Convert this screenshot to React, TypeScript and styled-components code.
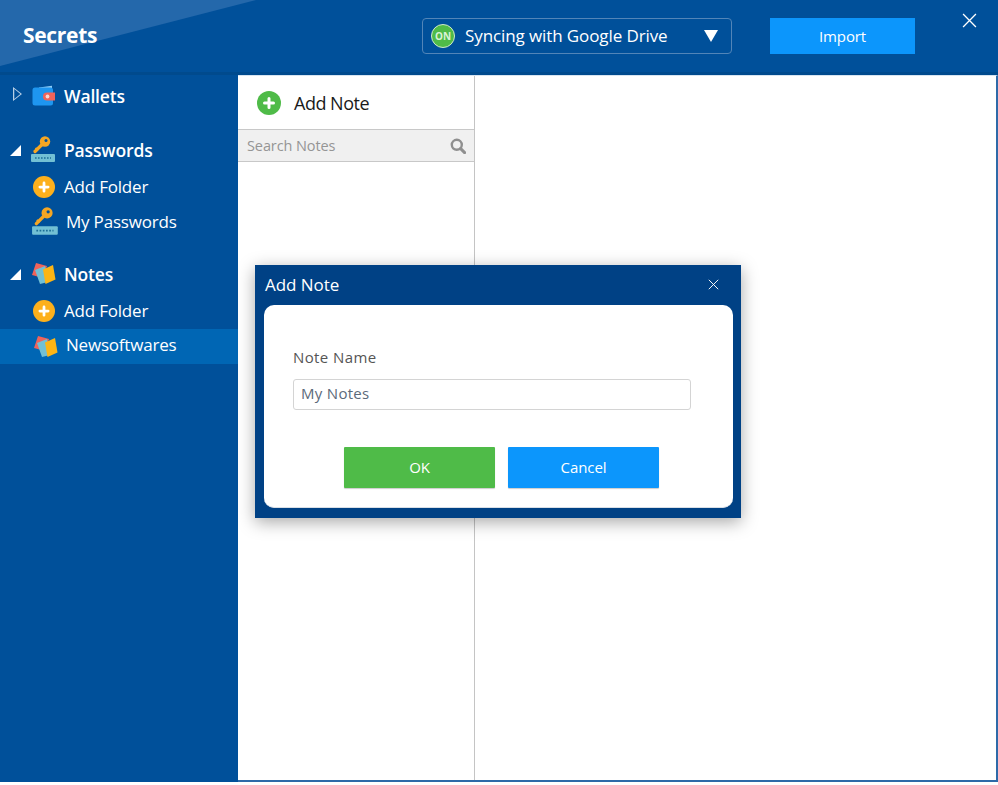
import React from 'react';
import styled, { createGlobalStyle } from 'styled-components';

const GlobalStyle = createGlobalStyle`
  html, body {
    margin: 0;
    padding: 0;
    background: #fff;
  }
  body {
    font-family: 'Open Sans', 'Noto Sans', 'Liberation Sans', sans-serif;
  }
  * {
    box-sizing: border-box;
  }
`;

const WalletIcon = () => (
  <svg width='24' height='22' viewBox='0 0 24 22'>
    <path d='M7 2.5 L20 0.8 V5 H7 Z' fill='#8ccbf5' />
    <rect x='0.5' y='2.5' width='20.5' height='18' rx='2.5' fill='#1e96f0' />
    <path d='M15 7.5 H23 V15.5 H15 a4 4 0 0 1 0-8 Z' fill='#f0635a' />
    <circle cx='15.5' cy='11.5' r='1.9' fill='#fbd5d0' />
  </svg>
);

const KeyIcon = ({ size }: { size: number }) => (
  <svg width={size} height={size} viewBox='0 0 28 28'>
    <circle cx='15' cy='5.5' r='5.2' fill='#f5a623' />
    <circle cx='16' cy='4.5' r='1.5' fill='#00509a' />
    <path d='M11.5 9 L5 15.5' stroke='#f5a623' strokeWidth='3.2' strokeLinecap='round' />
    <path d='M5.5 12 L8 14.5' stroke='#f5a623' strokeWidth='1.8' />
    <rect x='1' y='18' width='24' height='8' rx='1' fill='#72c0d4' />
    <path d='M5 22 H21' stroke='#1c6f96' strokeWidth='1.6' strokeDasharray='1.6 1.4' />
  </svg>
);

const NotesIcon = () => (
  <svg width='28' height='28' viewBox='0 0 28 28'>
    <polygon points='6,3 17,6 13,18 2,15' fill='#f0635a' />
    <polygon points='5,10 15,6 18,22 10,24' fill='#72c0d4' />
    <polygon points='13,9.5 23,5 25.5,19.5 15.5,24' fill='#fdb515' />
  </svg>
);

const PlusCircle = ({ fill, size }: { fill: string; size: number }) => (
  <svg width={size} height={size} viewBox='0 0 24 24'>
    <circle cx='12' cy='12' r='12' fill={fill} />
    <path d='M12 7.5 V16.5 M7.5 12 H16.5' stroke='#fff' strokeWidth='3' strokeLinecap='round' />
  </svg>
);

const CrossIcon = ({ size }: { size: number }) => (
  <svg width={size} height={size} viewBox='0 0 14 14'>
    <path d='M1 1 L13 13 M13 1 L1 13' stroke='#fff' strokeWidth='1.2' fill='none' />
  </svg>
);

const SearchIcon = () => (
  <svg width='16' height='16' viewBox='0 0 16 16'>
    <circle cx='6.8' cy='6.8' r='5' fill='none' stroke='#8f8f8f' strokeWidth='2.4' />
    <path d='M10.6 10.6 L14.6 14.6' stroke='#8f8f8f' strokeWidth='3' strokeLinecap='round' />
  </svg>
);

const App = () => {
  return (
    <>
      <GlobalStyle />
      <Window>
        <Header>
          <Title>Secrets</Title>
          <SyncSelect>
            <OnBadge>ON</OnBadge>
            <SyncText>Syncing with Google Drive</SyncText>
            <SyncCaret />
          </SyncSelect>
          <ImportButton>Import</ImportButton>
          <CloseButton>
            <CrossIcon size={15} />
          </CloseButton>
        </Header>
        <Body>
          <Sidebar>
            <Group>
              <GroupRow>
                <OpenArrow />
                <IconSlot>
                  <WalletIcon />
                </IconSlot>
                <GroupLabel>Wallets</GroupLabel>
              </GroupRow>
            </Group>
            <Group>
              <GroupRow>
                <FilledArrow />
                <IconSlot>
                  <KeyIcon size={28} />
                </IconSlot>
                <GroupLabel>Passwords</GroupLabel>
              </GroupRow>
              <ItemRow>
                <IconSlot>
                  <PlusCircle fill='#fdb01c' size={22} />
                </IconSlot>
                <ItemLabel>Add Folder</ItemLabel>
              </ItemRow>
              <ItemRow>
                <IconSlot $shifted>
                  <KeyIcon size={30} />
                </IconSlot>
                <ItemLabel $indent>My Passwords</ItemLabel>
              </ItemRow>
            </Group>
            <Group>
              <GroupRow>
                <FilledArrow />
                <IconSlot>
                  <NotesIcon />
                </IconSlot>
                <GroupLabel>Notes</GroupLabel>
              </GroupRow>
              <ItemRow>
                <IconSlot>
                  <PlusCircle fill='#fdb01c' size={22} />
                </IconSlot>
                <ItemLabel>Add Folder</ItemLabel>
              </ItemRow>
              <ItemRow $active>
                <IconSlot $shifted>
                  <NotesIcon />
                </IconSlot>
                <ItemLabel $indent $raised>
                  Newsoftwares
                </ItemLabel>
              </ItemRow>
            </Group>
          </Sidebar>
          <Content>
            <NotesColumn>
              <AddNoteBar>
                <PlusCircle fill='#4fbb48' size={24} />
                <span>Add Note</span>
              </AddNoteBar>
              <SearchBar>
                <span>Search Notes</span>
                <SearchIcon />
              </SearchBar>
            </NotesColumn>
            <DetailPane />
          </Content>
        </Body>
        <Dialog>
          <DialogHead>
            <span>Add Note</span>
            <DialogClose>
              <CrossIcon size={11} />
            </DialogClose>
          </DialogHead>
          <DialogCard>
            <FieldLabel>Note Name</FieldLabel>
            <FieldInput defaultValue='My Notes' />
            <DialogActions>
              <ActionButton $color='#4fbb48'>OK</ActionButton>
              <ActionButton $color='#0c96fc'>Cancel</ActionButton>
            </DialogActions>
          </DialogCard>
        </Dialog>
      </Window>
    </>
  );
};

const Window = styled.div`
  position: relative;
  width: 998px;
  height: 782px;
  display: flex;
  flex-direction: column;
  background: #00509a;
  overflow: hidden;
`;

const Header = styled.header`
  position: relative;
  flex: none;
  height: 75px;
  display: flex;
  align-items: flex-start;
  padding-left: 23px;
  background: #00509a;
  border-bottom: 3px solid #004a8d;

  &::before {
    content: '';
    position: absolute;
    left: 0;
    top: 0;
    width: 256px;
    height: 66px;
    background: #2468ab;
    clip-path: polygon(0 0, 100% 0, 0 100%);
  }
`;

const Title = styled.div`
  position: relative;
  width: 399px;
  margin-top: 20px;
  color: #fff;
  font-size: 21px;
  line-height: 30px;
  font-weight: 700;
  letter-spacing: -0.3px;
`;

const SyncSelect = styled.div`
  width: 310px;
  height: 36px;
  margin-top: 18px;
  padding: 0 13px 0 8px;
  display: flex;
  align-items: center;
  border: 1px solid #5285b8;
  border-radius: 4px;
`;

const OnBadge = styled.div`
  width: 24px;
  height: 24px;
  flex: none;
  display: flex;
  align-items: center;
  justify-content: center;
  border-radius: 50%;
  border: 1px solid #cfe8cc;
  background: #4fbb48;
  color: #d9f2d6;
  font-size: 10px;
  font-weight: 700;
`;

const SyncText = styled.span`
  flex: 1;
  margin-left: 10px;
  padding-bottom: 1px;
  color: #fff;
  font-size: 17px;
  letter-spacing: -0.1px;
  white-space: nowrap;
`;

const SyncCaret = styled.div`
  width: 0;
  height: 0;
  border-left: 7.5px solid transparent;
  border-right: 7.5px solid transparent;
  border-top: 12px solid #fff;
`;

const ImportButton = styled.button`
  all: unset;
  width: 145px;
  height: 36px;
  margin: 18px 0 0 38px;
  text-align: center;
  background: #0c96fc;
  color: #fff;
  font-size: 15px;
  line-height: 36px;
  letter-spacing: -0.1px;
`;

const CloseButton = styled.div`
  margin: 13px 0 0 47px;
  height: 15px;
  line-height: 0;
`;

const Body = styled.div`
  flex: 1;
  min-height: 0;
  display: flex;
`;

const Sidebar = styled.nav`
  width: 238px;
  flex: none;
  padding-top: 2px;
  display: flex;
  flex-direction: column;
  gap: 16px;
  color: #fff;
`;

const Group = styled.div`
  display: flex;
  flex-direction: column;
`;

const GroupRow = styled.div`
  position: relative;
  height: 37px;
  margin-bottom: 1px;
  display: flex;
  align-items: center;
  padding-left: 30px;
`;

const OpenArrow = styled.div`
  position: absolute;
  left: 13px;
  top: 10px;
  width: 9px;
  height: 14px;
  background: #b7cfe6;
  clip-path: polygon(0 0, 100% 50%, 0 100%, 0 0, 14% 14%, 14% 86%, 82% 50%, 14% 14%);
`;

const FilledArrow = styled.div`
  position: absolute;
  left: 10px;
  top: 14px;
  width: 11px;
  height: 11px;
  background: #fff;
  clip-path: polygon(100% 0, 100% 100%, 0 100%);
`;

const IconSlot = styled.div<{ $shifted?: boolean }>`
  width: 28px;
  height: 28px;
  flex: none;
  display: flex;
  align-items: center;
  justify-content: center;
  padding-left: ${(props) => (props.$shifted ? '4px' : '0')};

  svg {
    flex: none;
  }
`;

const GroupLabel = styled.span`
  margin-left: 6px;
  font-size: 17.5px;
  font-weight: 600;
  letter-spacing: -0.15px;
`;

const ItemRow = styled.div<{ $active?: boolean }>`
  height: 35px;
  margin-top: ${(props) => (props.$active ? '1px' : '0')};
  display: flex;
  align-items: center;
  padding-left: 30px;
  background: ${(props) => (props.$active ? '#0066b4' : 'transparent')};
`;

const ItemLabel = styled.span<{ $indent?: boolean; $raised?: boolean }>`
  margin-left: ${(props) => (props.$indent ? '8px' : '6px')};
  padding-bottom: ${(props) => (props.$raised ? '5px' : '1px')};
  font-size: 17px;
  letter-spacing: -0.2px;
`;

const Content = styled.main`
  flex: 1;
  display: flex;
  background: #fff;
  border: 1px solid #d7e4f1;
  border-left: 0;
  border-right: 2px solid #2e6aa8;
  border-bottom: 2px solid #2e6aa8;
`;

const NotesColumn = styled.section`
  width: 237px;
  flex: none;
  border-right: 1px solid #c4c4c4;
`;

const AddNoteBar = styled.div`
  height: 53px;
  display: flex;
  align-items: center;
  gap: 13px;
  padding-left: 19px;
  color: #1a1a1a;
  font-size: 18px;
  letter-spacing: -0.5px;
`;

const SearchBar = styled.div`
  height: 33px;
  display: flex;
  align-items: center;
  justify-content: space-between;
  padding: 0 8px 0 9px;
  background: #f0f0f0;
  border-top: 1px solid #c8c8c8;
  border-bottom: 1px solid #c8c8c8;
  color: #959595;
  font-size: 14.5px;
  letter-spacing: -0.1px;
`;

const DetailPane = styled.section`
  flex: 1;
`;

const Dialog = styled.div`
  position: absolute;
  left: 255px;
  top: 265px;
  width: 486px;
  height: 253px;
  display: flex;
  flex-direction: column;
  padding: 0 8px 10px 9px;
  background: #004185;
  box-shadow: 0 4px 16px rgba(0, 0, 0, 0.35);
`;

const DialogHead = styled.div`
  height: 40px;
  flex: none;
  display: flex;
  align-items: center;
  justify-content: space-between;
  padding: 0 14px 2px 1px;
  color: #fff;
  font-size: 17px;
  letter-spacing: -0.05px;
`;

const DialogClose = styled.div`
  height: 11px;
  line-height: 0;
`;

const DialogCard = styled.div`
  flex: 1;
  padding: 42px 41px 0 29px;
  background: #fff;
  border: 1px solid #d9dfe6;
  border-width: 0 0 1px;
  border-radius: 10px;
`;

const FieldLabel = styled.div`
  color: #555;
  font-size: 15px;
  line-height: 20px;
  letter-spacing: 0.4px;
`;

const FieldInput = styled.input`
  display: block;
  width: 398px;
  height: 31px;
  margin-top: 12px;
  padding: 0 7px 4px;
  border: 1px solid #d4d4d4;
  border-radius: 3px;
  outline: none;
  color: #5c6a7a;
  font-family: inherit;
  font-size: 15px;
  letter-spacing: 0.3px;
`;

const DialogActions = styled.div`
  display: flex;
  gap: 13px;
  margin: 37px 0 0 51px;
`;

const ActionButton = styled.button<{ $color: string }>`
  all: unset;
  width: 151px;
  height: 41px;
  text-align: center;
  background: ${(props) => props.$color};
  border-radius: 1px;
  box-shadow: 0 1px 1px rgba(0, 0, 0, 0.2);
  color: #fff;
  font-size: 15px;
  line-height: 41px;
  letter-spacing: -0.1px;
`;

export default App;
